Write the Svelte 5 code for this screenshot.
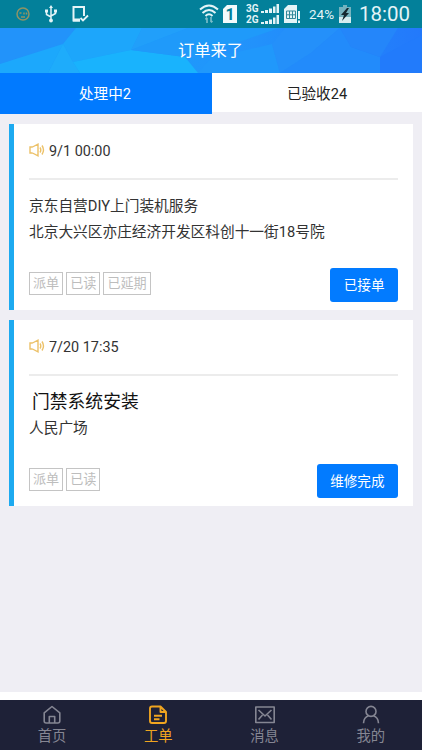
<script>
  let activeTab = $state('processing')
  let activeNav = $state('orders')

  const tabs = [
    { id: 'processing', label: '处理中', count: 2 },
    { id: 'accepted', label: '已验收', count: 24 },
  ]

  const orders = [
    {
      time: '9/1 00:00',
      title: '京东自营DIY上门装机服务',
      address: '北京大兴区亦庄经济开发区科创十一街18号院',
      tags: ['派单', '已读', '已延期'],
      action: '已接单',
    },
    {
      time: '7/20 17:35',
      title: '门禁系统安装',
      address: '人民广场',
      tags: ['派单', '已读'],
      action: '维修完成',
      large: true,
    },
  ]

  const navItems = [
    { id: 'home', label: '首页' },
    { id: 'orders', label: '工单' },
    { id: 'messages', label: '消息' },
    { id: 'profile', label: '我的' },
  ]
</script>

{#snippet signalBars()}
  <svg width="18" height="9" viewBox="0 0 18 9" fill="#e4f4f7">
    <path d="M0 7h3v2H0zM4 6h3v3H4zM8 4.5h3V9H8zM12 2.5h2.5V9H12zM15.5 0H18v9h-2.5z" />
  </svg>
{/snippet}

<div class="app">
  <div class="status-bar">
    <div class="status-left">
      <svg class="face" width="14" height="14" viewBox="0 0 14 14" fill="none" stroke="#8e9365" stroke-width="1.5">
        <circle cx="7" cy="7" r="6" />
        <path d="M3.5 6h2M8 5.5v2M10.5 5.5v2M5 10h4" />
      </svg>
      <svg class="usb" width="12" height="18" viewBox="0 0 12 18" fill="none" stroke="#e4f4f7" stroke-width="1.5">
        <path d="M6 2v13M6 12L1.5 9.5V6M6 11l4.5-2.5V6" />
        <path d="M6 0l2 3H4zM0 4.5h3v3H0zM9 4.5h3v3H9z" fill="#e4f4f7" stroke="none" />
        <circle cx="6" cy="15.5" r="1.9" fill="#e4f4f7" stroke="none" />
      </svg>
      <svg width="17" height="18" viewBox="0 0 17 18" fill="none" stroke="#e4f4f7">
        <path d="M12 11V2H1.5v13.5H8" stroke-width="2" />
        <path d="M1 15h7" stroke-width="3" />
        <path d="M8.5 13l2.5 2.5 5-5" stroke-width="1.8" />
      </svg>
    </div>
    <div class="status-right">
      <svg class="wifi" width="20" height="20" viewBox="0 0 20 20" fill="none" stroke="#e4f4f7" stroke-width="2">
        <path d="M1 5.500Q10-2.500 19 5.500M3.500 9Q10 3 16.500 9M6.500 12Q10 8.500 13.500 12" />
        <path d="M8 19v-5M6.500 15.500L8 13.500M12 13v5M13.500 17L12 18.500" stroke="#7dbdca" stroke-width="1.600" />
      </svg>
      <div class="sim">1</div>
      <div class="signals">
        <div class="signal"><span>3G</span>{@render signalBars()}</div>
        <div class="signal"><span>2G</span>{@render signalBars()}</div>
      </div>
      <svg class="sd" width="17" height="19" viewBox="0 0 17 19">
        <path d="M4 0h9v18H0V4z" fill="#e4f4f7" />
        <path d="M2.500 6h9v7.500h-9zM5.500 6v7M8.500 6v7M3 9.800h8" fill="none" stroke="#35899b" />
        <path d="M13 6h4v12h-4z" fill="#03809a" />
        <path d="M14 6h2v8h-2zM14 15.500h2V18h-2z" fill="#e4f4f7" />
      </svg>
      <span class="percent">24%</span>
      <svg class="battery" width="12" height="18" viewBox="0 0 12 18">
        <path d="M4 0h4v2h4v16H0V2h4z" fill="#74b3bf" />
        <path d="M0 12h12v6H0z" fill="#d5ecef" />
        <path d="M8 3L2 10h3l-2 6 7-8H7l3-5z" fill="#142830" />
      </svg>
      <span class="clock">18:00</span>
    </div>
  </div>

  <header class="header">
    <svg class="header-bg" viewBox="0 0 422 45" preserveAspectRatio="none">
      <defs>
        <linearGradient id="sky" x1="0" x2="1">
          <stop offset="0" stop-color="#2590f8" />
          <stop offset="0.25" stop-color="#1c9ffb" />
          <stop offset="0.6" stop-color="#2292fb" />
          <stop offset="1" stop-color="#2379fb" />
        </linearGradient>
      </defs>
      <rect width="422" height="45" fill="url(#sky)" />
      <path d="M0 36L63 16 76 0H0z" fill="#2293fa" />
      <path d="M0 36L63 16 48 45H0z" fill="#1ca8fc" />
      <path d="M63 16L76 0h66l-11 22-58 12z" fill="#1da6fb" />
      <path d="M63 16l10 18 7 11H48z" fill="#1eacfb" />
      <path d="M73 34l58-12 54 7 13 16H80z" fill="#19b3fd" />
      <path d="M142 0h46l-57 22z" fill="#219ffa" />
      <path d="M188 0h91l-51 18-43 11-54-7z" fill="#1f9afa" />
      <path d="M211 30l61-14 8 29h-82z" fill="#2098fb" />
      <path d="M272 16L285 0h55l-29 25-31 20z" fill="#2490fa" />
      <path d="M340 0l11 19 29 10v16h-100l31-20z" fill="#228bfb" />
      <path d="M380 29L422 7v38h-42z" fill="#227bfb" />
      <path d="M340 0h58l-18 29-29-10z" fill="#2486fa" />
    </svg>
    <h1>订单来了</h1>
  </header>

  <div class="tabs">
    {#each tabs as tab (tab.id)}
      <button class="tab" class:active={activeTab === tab.id} onclick={() => (activeTab = tab.id)}>
        {tab.label}{tab.count}
      </button>
    {/each}
  </div>

  <main class="list">
    {#each orders as order (order.time)}
      <article class="card">
        <div class="card-time">
          <svg width="16" height="14" viewBox="0 0 16 14" fill="none" stroke="#ecc168" stroke-width="1.4">
            <path d="M3.500 4H1v6h2.500M3.500 4L9 1.200v11.600L3.500 10M11 4.500q1.600 2.500 0 5M13 2.500q3 4.500 0 9" />
          </svg>
          <span>{order.time}</span>
        </div>
        <div class="card-body">
          <div class="card-title" class:large={order.large}>{order.title}</div>
          <div class="card-address">{order.address}</div>
        </div>
        <div class="card-footer">
          <div class="tags">
            {#each order.tags as tag}
              <span class="tag">{tag}</span>
            {/each}
          </div>
          <button class="action">{order.action}</button>
        </div>
      </article>
    {/each}
  </main>

  <nav class="nav">
    {#each navItems as item (item.id)}
      <button class="nav-item" class:active={activeNav === item.id} onclick={() => (activeNav = item.id)}>
        <svg width="20" height="20" viewBox="0 0 20 20" fill="none" stroke="currentColor" stroke-width="1.6" stroke-linejoin="round">
          {#if item.id === 'home'}
            <path d="M2.200 7.800L10 1.500l7.800 6.300V16q0 2-2 2H4.200q-2 0-2-2zM7.300 18v-6.500h5.400V18" />
          {:else if item.id === 'orders'}
            <path d="M12.500 1.500H4q-2 0-2 2V16q0 2 2 2h12q2 0 2-2V7zM12.500 1.500V7H18M6 10.800h8M6 14.300h5.500" stroke-width="1.900" />
          {:else if item.id === 'messages'}
            <path d="M.8 2h18.400v15.500H.8zM3.500 5L10 11l6.500-6M3.500 14.500l4-4.500M16.500 14.500l-4-4.500" />
          {:else}
            <circle cx="10" cy="6.400" r="5" />
            <path d="M7.500 10.700q-4.700 1.500-5 7.500M12.500 10.700q4.700 1.500 5 7.500" />
          {/if}
        </svg>
        <span>{item.label}</span>
      </button>
    {/each}
  </nav>
</div>

<style>
  :global(body) {
    margin: 0;
  }

  .app {
    width: 422px;
    height: 750px;
    display: flex;
    flex-direction: column;
    overflow: hidden;
    background: #efeef4;
    color: #333;
    font-family: Roboto, 'Noto Sans CJK SC', sans-serif;
  }

  button {
    border: none;
    padding: 0;
    font-family: inherit;
    cursor: pointer;
  }

  svg {
    display: block;
    flex-shrink: 0;
  }

  /* Status bar */
  .status-bar {
    height: 28px;
    flex-shrink: 0;
    display: flex;
    justify-content: space-between;
    background: #03809a;
    color: #e4f4f7;
  }

  .status-left,
  .status-right {
    display: flex;
    align-items: center;
  }

  .status-left {
    padding-left: 16px;
  }

  .face {
    margin-right: 15px;
  }

  .usb {
    margin-right: 15px;
  }

  .status-right {
    padding-right: 12px;
  }

  .wifi {
    margin-right: 4px;
  }

  .sim {
    width: 14px;
    height: 18px;
    margin-right: 9px;
    background: #f3fafb;
    clip-path: polygon(4px 0, 100% 0, 100% 100%, 0 100%, 0 4px);
    color: #03809a;
    font-size: 16px;
    font-weight: 700;
    line-height: 19px;
    text-align: center;
  }

  .signals {
    width: 33px;
    margin-right: 5px;
  }

  .signal {
    height: 11px;
    display: flex;
    align-items: center;
    justify-content: space-between;
    font-size: 10px;
    font-weight: 700;
    line-height: 11px;
  }

  .sd {
    margin-right: 8px;
  }

  .percent {
    width: 26px;
    margin-right: 4px;
    font-size: 13.5px;
    line-height: 28px;
    white-space: nowrap;
  }

  .battery {
    margin-right: 8px;
  }

  .clock {
    width: 51px;
    font-size: 20.5px;
    line-height: 28px;
    white-space: nowrap;
  }

  /* Header */
  .header {
    position: relative;
    height: 45px;
    flex-shrink: 0;
    display: flex;
    align-items: center;
    justify-content: center;
  }

  .header-bg {
    position: absolute;
    inset: 0;
    width: 100%;
    height: 100%;
  }

  h1 {
    position: relative;
    margin: 0;
    padding-right: 1px;
    color: #fff;
    font-size: 16.3px;
    font-weight: 400;
    line-height: 24px;
  }

  /* Tabs */
  .tabs {
    height: 41px;
    flex-shrink: 0;
    display: flex;
    align-items: flex-start;
  }

  .tab {
    flex: 1;
    height: 39px;
    padding: 0 0 1px;
    background: #fff;
    color: #222;
    font-size: 14.6px;
  }

  .tab.active {
    height: 41px;
    padding: 0 2px 3px 0;
    background: #017aff;
    color: #fff;
  }

  /* Order cards */
  .list {
    flex: 1;
    display: flex;
    flex-direction: column;
    gap: 10px;
    padding: 10px 9px 0;
    border-bottom: 8px solid #fff;
  }

  .card {
    box-sizing: border-box;
    height: 186px;
    display: flex;
    flex-direction: column;
    padding: 0 15px 8px;
    border-left: 5px solid #1daaf0;
    background: #fff;
  }

  .card-time {
    box-sizing: border-box;
    height: 56px;
    display: flex;
    align-items: center;
    gap: 4px;
    border-bottom: 2px solid #ececec;
    font-size: 14.4px;
  }

  .card-time svg {
    margin-top: -2px;
  }

  .card-body {
    flex: 1;
    padding-top: 13px;
    font-size: 14.7px;
    line-height: 26px;
    white-space: nowrap;
  }

  .card-title.large {
    padding-left: 3px;
    color: #111;
    font-size: 17.8px;
  }

  .card-footer {
    display: flex;
    align-items: center;
    justify-content: space-between;
  }

  .tags {
    display: flex;
    gap: 3px;
    margin-top: -3px;
  }

  .tag {
    box-sizing: border-box;
    height: 23px;
    padding: 0 3px;
    border: 1px solid #c4c4c4;
    color: #bdbdbd;
    font-size: 13.1px;
    line-height: 21px;
  }

  .action {
    height: 34px;
    padding: 0 13.5px 3px;
    border-radius: 3px;
    background: #027bff;
    color: #fff;
    font-size: 13.6px;
  }

  /* Bottom navigation */
  .nav {
    height: 50px;
    flex-shrink: 0;
    display: flex;
    margin: 0 -2px 0 -1px;
    background: #1e2137;
  }

  .nav-item {
    flex: 1;
    display: flex;
    flex-direction: column;
    align-items: center;
    padding-top: 5px;
    background: none;
    color: #858693;
    font-size: 14.3px;
    line-height: 23px;
  }

  .nav-item.active {
    color: #f0a520;
  }
</style>
